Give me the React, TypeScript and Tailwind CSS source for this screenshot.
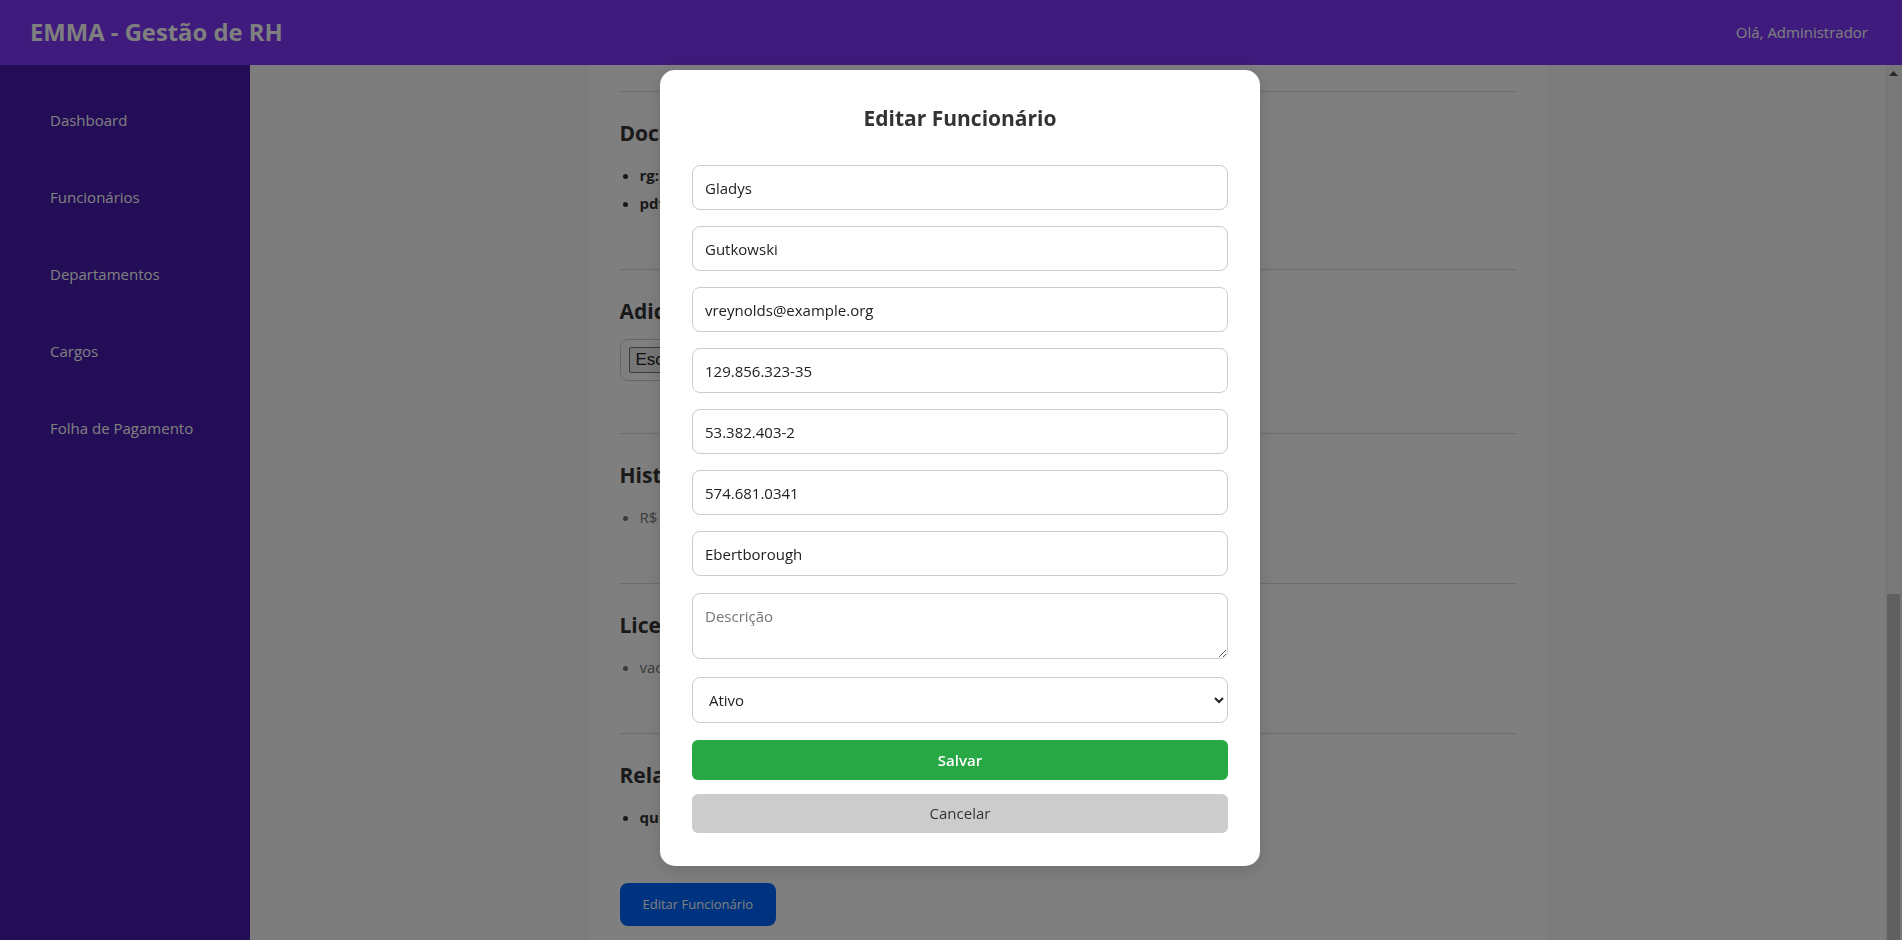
import { useLayoutEffect, useRef } from 'react';

const menu = ['Dashboard', 'Funcionários', 'Departamentos', 'Cargos', 'Folha de Pagamento'];

const info = [
  ['Nome', 'Gladys Gutkowski'],
  ['Email', 'vreynolds@example.org'],
  ['CPF', '129.856.323-35'],
  ['RG', '53.382.403-2'],
  ['Telefone', '574.681.0341'],
  ['Cidade', 'Ebertborough'],
  ['Departamento', 'Financeiro'],
  ['Cargo', 'Analista'],
  ['Salário', 'R$ 4.820,00'],
  ['Admissão', '12/03/2021'],
  ['Status', 'Ativo'],
  ['Descrição', '-'],
];

const Section = ({ title, children }: { title: string; children: React.ReactNode }) => (
  <section className="border-t border-[#dddddd] pt-[26px] pb-[52px]">
    <h3 className="text-[21px] font-bold leading-[30px] text-[#333] mb-[13px]">{title}</h3>
    {children}
  </section>
);

const Bullets = ({ items, bold }: { items: string[]; bold?: boolean }) => (
  <ul className="list-disc pl-5 text-[15px] leading-[28px]">
    {items.map((t) => {
      const [label, ...rest] = t.split(': ');
      return bold ? (
        <li key={t} className="text-[#333]">
          <strong>{label}:</strong> {rest.join(': ')}
        </li>
      ) : (
        <li key={t} className="text-[#777]">
          {t}
        </li>
      );
    })}
  </ul>
);

const Field = ({ value, placeholder }: { value?: string; placeholder?: string }) => (
  <input
    defaultValue={value}
    placeholder={placeholder}
    className="h-[45px] w-full rounded-lg border border-[#cccccc] bg-white px-3 text-[15px] text-[#222] outline-none"
  />
);

export default function App() {
  const scroller = useRef<HTMLDivElement>(null);

  useLayoutEffect(() => {
    if (scroller.current) scroller.current.scrollTop = scroller.current.scrollHeight;
  }, []);

  return (
    <div className="flex h-screen flex-col overflow-hidden font-['Open_Sans',sans-serif]">
      <header className="flex h-[65px] shrink-0 items-center justify-between bg-[#7c36f8] pl-[30px] pr-[34px] text-white">
        <h1 className="text-[23.8px] font-bold">EMMA - Gestão de RH</h1>
        <span className="text-[15px]">Olá, Administrador</span>
      </header>

      <div className="flex min-h-0 flex-1">
        <aside className="w-[250px] shrink-0 bg-[#461aae] pt-[17px]">
          <nav>
            {menu.map((m) => (
              <a key={m} href="#" className="block py-[28px] pl-[50px] text-[15px] leading-[21px] text-white">
                {m}
              </a>
            ))}
          </nav>
        </aside>

        <main
          ref={scroller}
          className="flex-1 overflow-y-auto bg-[#fbfbfb] pt-8 [scrollbar-width:none]"
        >
          <div className="mx-auto w-full max-w-[960px] bg-white px-8 pt-8 pb-[14px] shadow-[0_0_10px_rgba(0,0,0,0.06)]">
            <h2 className="mb-5 text-[27px] font-bold leading-[40px] text-[#333]">Detalhes do Funcionário</h2>
            <div className="pb-[14px] text-[15px] leading-[28px] text-[#444]">
              {info.map(([k, v]) => (
                <p key={k}>
                  <strong>{k}:</strong> {v}
                </p>
              ))}
            </div>

            <Section title="Endereço">
              <Bullets bold items={['rua: Rua das Flores, 120', 'cep: 01234-567']} />
            </Section>
            <Section title="Dependentes">
              <Bullets items={['Lucas Gutkowski - filho', 'Ana Gutkowski - filha']} />
            </Section>
            <Section title="Benefícios">
              <Bullets items={['Vale transporte', 'Vale refeição', 'Plano de saúde']} />
            </Section>
            <Section title="Histórico de Cargos">
              <Bullets items={['Assistente - 2021', 'Analista - 2023']} />
            </Section>
            <Section title="Avaliações">
              <Bullets items={['2023 - Nota 8,5']} />
            </Section>

            <Section title="Documentos">
              <Bullets bold items={['rg: rg_gladys.pdf', 'pdf: contrato.pdf']} />
            </Section>
            <Section title="Adicionar Documento">
              <div className="flex h-[42px] w-[560px] items-center gap-3 rounded-lg border border-[#cccccc] px-[8px] font-['Liberation_Sans',sans-serif] text-[17px] text-[#222]">
                <span className="rounded-[2px] border border-[#767676] bg-[#efefef] px-[6px] leading-[24px]">
                  Escolher arquivo
                </span>
                <span>Nenhum arquivo escolhido</span>
              </div>
            </Section>
            <Section title="Histórico Salarial">
              <Bullets items={['R$ 4.820,00 - 01/2024']} />
            </Section>
            <Section title="Licenças">
              <Bullets items={['vacation - 10/01 a 20/01']} />
            </Section>
            <Section title="Relatórios">
              <Bullets bold items={['quinzenal: relatorio.pdf']} />
            </Section>

            <button className="h-[43px] rounded-lg bg-[#0066ff] px-[23px] text-[13px] text-white">Editar Funcionário</button>
          </div>
        </main>

        {/* scrollbar of the content area */}
        <div className="flex w-[17px] shrink-0 flex-col bg-[#f1f1f1]">
          <div className="flex h-[17px] items-center justify-center">
            <svg width="9" height="5" viewBox="0 0 9 5">
              <polygon points="0,5 4.5,0 9,5" fill="#505050" />
            </svg>
          </div>
          <div className="flex-1" />
          <div className="mx-[2px] h-[346px] bg-[#c1c1c1]" />
        </div>
      </div>

      <div className="fixed inset-0 z-50 flex items-center justify-center bg-black/50 pb-[4px] pl-[18px]">
        <div className="w-[600px] rounded-[15px] bg-white p-8 pb-[33px] shadow-[0_4px_20px_rgba(0,0,0,0.15)]">
          <h2 className="text-center text-[21px] font-bold leading-[32px] text-[#333]">Editar Funcionário</h2>
          <form className="mt-[31px] flex flex-col">
            <div className="flex flex-col gap-4">
              <Field value="Gladys" />
              <Field value="Gutkowski" />
              <Field value="vreynolds@example.org" />
              <Field value="129.856.323-35" />
              <Field value="53.382.403-2" />
              <Field value="574.681.0341" />
              <Field value="Ebertborough" />
            </div>
            <textarea
              placeholder="Descrição"
              className="mt-[17px] h-[66px] w-full rounded-lg border border-[#cccccc] p-3 text-[15px] leading-[20px] text-[#222] outline-none placeholder:text-[#757575]"
            />
            <select
              defaultValue="ativo"
              className="mt-[18px] h-[46px] w-full rounded-lg border border-[#cccccc] bg-white px-3 text-[15px] text-[#222] outline-none"
            >
              <option value="ativo">Ativo</option>
              <option value="inativo">Inativo</option>
            </select>
            <button type="button" className="mt-[17px] h-[40px] w-full rounded-md bg-[#28a745] text-[15px] font-semibold text-white">
              Salvar
            </button>
            <button type="button" className="mt-[14px] h-[39px] w-full rounded-md bg-[#cccccc] text-[15px] text-[#333]">
              Cancelar
            </button>
          </form>
        </div>
      </div>
    </div>
  );
}
